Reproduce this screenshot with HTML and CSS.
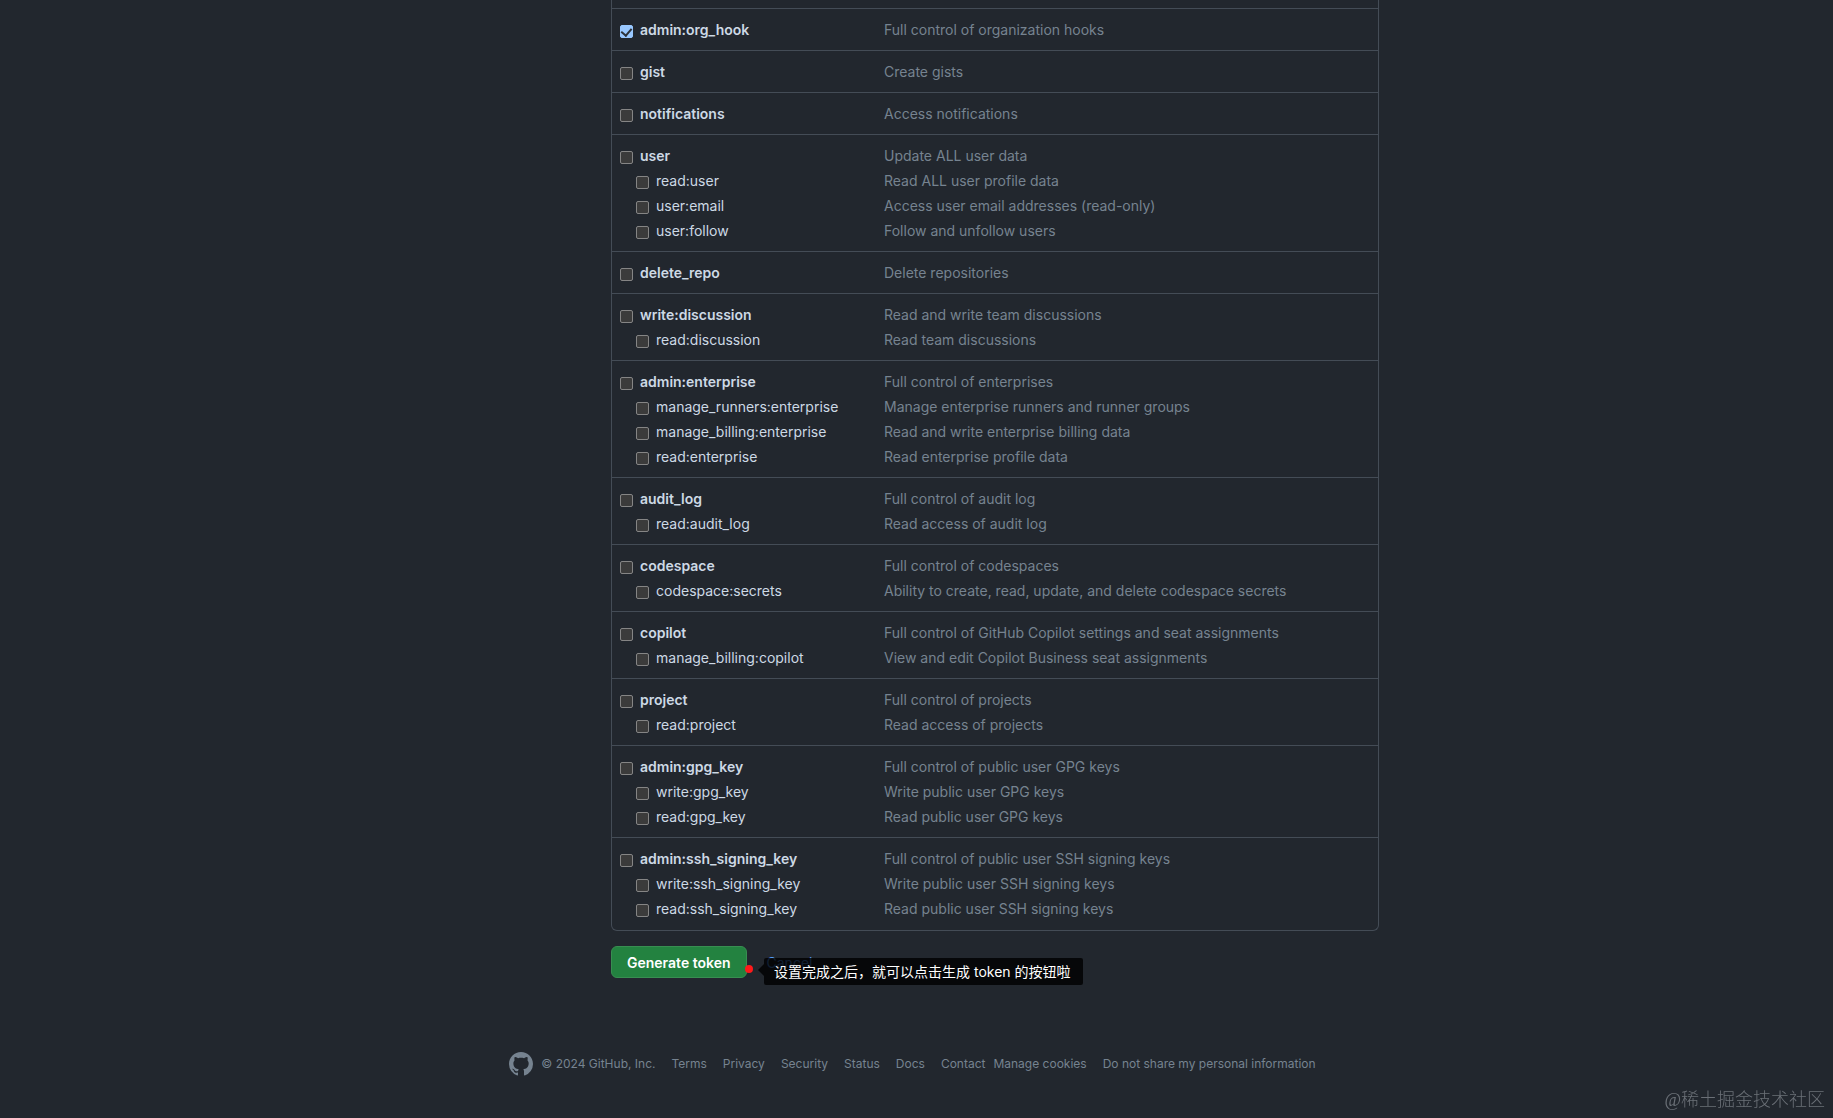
FILE: index.html
```html
<!DOCTYPE html>
<html lang="en">
<head>
  <meta charset="UTF-8" />
  <meta name="viewport" content="width=device-width, initial-scale=1.0"/>
  <title>New personal access token (classic)</title>
  <link rel="stylesheet" href="styles.css">
</head>
<body>

  <main class="container">
    <form class="token-form">
      <ul class="scopes">
        <li class="scope-group">
          <div class="scope"><label><input type="checkbox" checked> admin:org_hook</label><span class="desc">Full control of organization hooks</span></div>
        </li>
        <li class="scope-group">
          <div class="scope"><label><input type="checkbox"> gist</label><span class="desc">Create gists</span></div>
        </li>
        <li class="scope-group">
          <div class="scope"><label><input type="checkbox"> notifications</label><span class="desc">Access notifications</span></div>
        </li>
        <li class="scope-group">
          <div class="scope"><label><input type="checkbox"> user</label><span class="desc">Update ALL user data</span></div>
          <div class="scope child"><label><input type="checkbox"> read:user</label><span class="desc">Read ALL user profile data</span></div>
          <div class="scope child"><label><input type="checkbox"> user:email</label><span class="desc">Access user email addresses (read-only)</span></div>
          <div class="scope child"><label><input type="checkbox"> user:follow</label><span class="desc">Follow and unfollow users</span></div>
        </li>
        <li class="scope-group">
          <div class="scope"><label><input type="checkbox"> delete_repo</label><span class="desc">Delete repositories</span></div>
        </li>
        <li class="scope-group">
          <div class="scope"><label><input type="checkbox"> write:discussion</label><span class="desc">Read and write team discussions</span></div>
          <div class="scope child"><label><input type="checkbox"> read:discussion</label><span class="desc">Read team discussions</span></div>
        </li>
        <li class="scope-group">
          <div class="scope"><label><input type="checkbox"> admin:enterprise</label><span class="desc">Full control of enterprises</span></div>
          <div class="scope child"><label><input type="checkbox"> manage_runners:enterprise</label><span class="desc">Manage enterprise runners and runner groups</span></div>
          <div class="scope child"><label><input type="checkbox"> manage_billing:enterprise</label><span class="desc">Read and write enterprise billing data</span></div>
          <div class="scope child"><label><input type="checkbox"> read:enterprise</label><span class="desc">Read enterprise profile data</span></div>
        </li>
        <li class="scope-group">
          <div class="scope"><label><input type="checkbox"> audit_log</label><span class="desc">Full control of audit log</span></div>
          <div class="scope child"><label><input type="checkbox"> read:audit_log</label><span class="desc">Read access of audit log</span></div>
        </li>
        <li class="scope-group">
          <div class="scope"><label><input type="checkbox"> codespace</label><span class="desc">Full control of codespaces</span></div>
          <div class="scope child"><label><input type="checkbox"> codespace:secrets</label><span class="desc">Ability to create, read, update, and delete codespace secrets</span></div>
        </li>
        <li class="scope-group">
          <div class="scope"><label><input type="checkbox"> copilot</label><span class="desc">Full control of GitHub Copilot settings and seat assignments</span></div>
          <div class="scope child"><label><input type="checkbox"> manage_billing:copilot</label><span class="desc">View and edit Copilot Business seat assignments</span></div>
        </li>
        <li class="scope-group">
          <div class="scope"><label><input type="checkbox"> project</label><span class="desc">Full control of projects</span></div>
          <div class="scope child"><label><input type="checkbox"> read:project</label><span class="desc">Read access of projects</span></div>
        </li>
        <li class="scope-group">
          <div class="scope"><label><input type="checkbox"> admin:gpg_key</label><span class="desc">Full control of public user GPG keys</span></div>
          <div class="scope child"><label><input type="checkbox"> write:gpg_key</label><span class="desc">Write public user GPG keys</span></div>
          <div class="scope child"><label><input type="checkbox"> read:gpg_key</label><span class="desc">Read public user GPG keys</span></div>
        </li>
        <li class="scope-group">
          <div class="scope"><label><input type="checkbox"> admin:ssh_signing_key</label><span class="desc">Full control of public user SSH signing keys</span></div>
          <div class="scope child"><label><input type="checkbox"> write:ssh_signing_key</label><span class="desc">Write public user SSH signing keys</span></div>
          <div class="scope child"><label><input type="checkbox"> read:ssh_signing_key</label><span class="desc">Read public user SSH signing keys</span></div>
        </li>
      </ul>

      <div class="actions">
        <button type="submit" class="btn-primary">Generate token</button>
        <a href="#" class="cancel">Cancel</a>
        <span class="dot"></span>
        <span class="tip" lang="zh-CN">设置完成之后，就可以点击生成 token 的按钮啦</span>
      </div>
    </form>
  </main>

  <footer class="footer">
    <a href="#" class="logo" aria-label="GitHub">
      <svg width="24" height="24" viewBox="0 0 16 16" fill="currentColor">
        <path d="M8 0c4.42 0 8 3.58 8 8a8.013 8.013 0 0 1-5.45 7.59c-.4.08-.55-.17-.55-.38 0-.27.01-1.13.01-2.2 0-.75-.25-1.23-.54-1.48 1.78-.2 3.65-.88 3.65-3.95 0-.88-.31-1.59-.82-2.15.08-.2.36-1.02-.08-2.12 0 0-.67-.22-2.2.82-.64-.18-1.32-.27-2-.27-.68 0-1.36.09-2 .27-1.53-1.03-2.2-.82-2.2-.82-.44 1.1-.16 1.92-.08 2.12-.51.56-.82 1.28-.82 2.15 0 3.06 1.86 3.75 3.64 3.95-.23.2-.44.55-.51 1.07-.46.21-1.61.55-2.33-.66-.15-.24-.6-.83-1.23-.82-.67.01-.27.38.01.53.34.19.73.9.82 1.13.16.45.68 1.31 2.69.94 0 .67.01 1.3.01 1.49 0 .21-.15.45-.55.38A7.995 7.995 0 0 1 0 8c0-4.42 3.58-8 8-8Z"/>
      </svg>
    </a>
    <span class="copyright">© 2024 GitHub, Inc.</span>
    <nav class="footer-links">
      <a href="#">Terms</a>
      <a href="#">Privacy</a>
      <a href="#">Security</a>
      <a href="#">Status</a>
      <a href="#">Docs</a>
      <a href="#">Contact</a>
    </nav>
    <nav class="footer-links privacy-links">
      <a href="#">Manage cookies</a>
      <a href="#">Do not share my personal information</a>
    </nav>
  </footer>

  <div class="watermark" lang="zh-CN">@稀土掘金技术社区</div>

</body>
</html>
```

FILE: styles.css
```css
* {
  box-sizing: border-box;
}

body {
  margin: 0;
  min-height: 100vh;
  background-color: #22272e;
  color: #cdd9e5;
  font-family: Inter, "Noto Sans CJK SC", sans-serif;
  font-size: 14px;
  line-height: 25px;
}

a {
  color: inherit;
  text-decoration: none;
}

.container {
  max-width: 925px;
  margin: 0 auto;
  padding-left: 157px;
}

/* scope list */
.scopes {
  list-style: none;
  margin: 0;
  padding: 8px 0 1px;
  border: 1px solid #444c56;
  border-top: none;
  border-radius: 0 0 6px 6px;
}

.scope-group {
  padding: 8px;
  border-top: 1px solid #444c56;
}

.scope {
  display: grid;
  grid-template-columns: 264px 1fr;
}

.scope label {
  display: flex;
  align-items: center;
  gap: 7px;
  font-weight: 600;
}

.scope.child label {
  padding-left: 16px;
  font-weight: 400;
}

.desc {
  color: #768390;
}

input[type="checkbox"] {
  appearance: none;
  display: grid;
  place-items: center;
  width: 13px;
  height: 13px;
  margin: 3px 0 0;
  background-color: #3b3b3b;
  border: 1px solid #858585;
  border-radius: 2px;
}

input[type="checkbox"]:checked {
  background-color: #99c8ff;
  border-color: #99c8ff;
}

input[type="checkbox"]:checked::before {
  content: "";
  width: 5px;
  height: 8px;
  margin-bottom: 2px;
  border: solid #2d333b;
  border-width: 0 2px 2px 0;
  transform: rotate(40deg);
}

/* buttons */
.actions {
  position: relative;
  display: flex;
  align-items: center;
  gap: 20px;
  margin-top: 15px;
}

.btn-primary {
  height: 32px;
  padding: 0 15px;
  background-color: #238240;
  color: #fff;
  border: 1px solid #388e51;
  border-radius: 6px;
  font-family: inherit;
  font-size: 14px;
  font-weight: 600;
  cursor: pointer;
}

.cancel {
  color: #539bf5;
}

.dot {
  position: absolute;
  top: 19px;
  left: 134px;
  width: 8px;
  height: 8px;
  background-color: #ff1a1a;
  border-radius: 50%;
}

.tip {
  position: absolute;
  top: 12px;
  left: 153px;
  padding: 0 12px 0 10px;
  background-color: rgba(0, 0, 0, 0.8);
  color: #fff;
  border-radius: 2px;
  line-height: 27px;
  white-space: nowrap;
}

.tip::before {
  content: "";
  position: absolute;
  top: 6px;
  right: 100%;
  border: 6px solid transparent;
  border-left: none;
  border-right-color: rgba(0, 0, 0, 0.8);
}

/* footer */
.footer {
  display: flex;
  justify-content: center;
  align-items: center;
  margin-top: 74px;
  padding-right: 8px;
  color: #768390;
  font-size: 12px;
  line-height: 24px;
}

.logo {
  display: flex;
  margin-right: 8px;
}

.footer-links {
  display: flex;
  gap: 16px;
  margin-left: 16px;
}

.privacy-links {
  margin-left: 8px;
}

.watermark {
  position: fixed;
  right: 8px;
  bottom: 5px;
  color: #6b7077;
  font-family: "Liberation Serif", "Noto Sans CJK SC", serif;
  font-size: 18px;
  font-weight: 300;
}
```
